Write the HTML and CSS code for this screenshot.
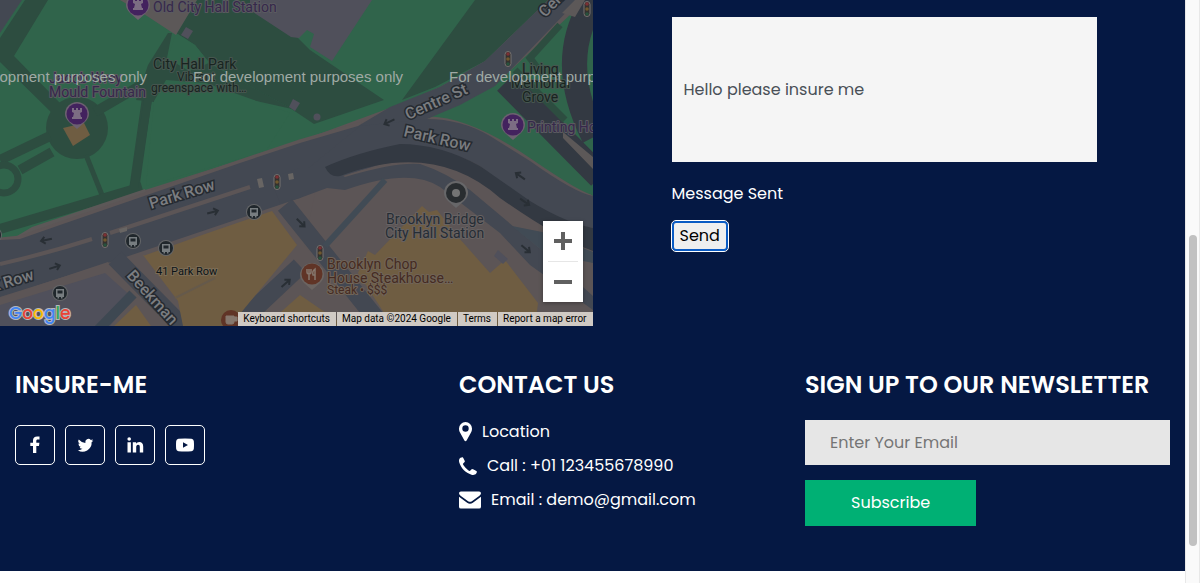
FILE: index.html
```html
<!DOCTYPE html>
<html lang="en">
<head>
<meta charset="utf-8">
<meta name="viewport" content="width=device-width, initial-scale=1">
<title>Insure-Me</title>
<link rel="stylesheet" href="styles.css">
</head>
<body>
<div class="page">
  <main class="contact">
    <section class="map" aria-label="Map">
      <svg class="map-art" viewBox="0 0 593 326" preserveAspectRatio="xMinYMax slice">
        <defs>
          <g id="bus"><circle r="8" fill="#656769"/><circle r="7" fill="#20272c"/><path d="M-4-4h8v8h-1.500v1.500h-1.500V4h-2v1.500h-1.500V4H-4z" fill="#777d80"/><path d="M-2.500-2.500h5v3h-5z" fill="#20272c"/></g>
          <g id="signal"><rect x="-3" y="-7.500" width="6" height="15" rx="3" fill="#34312f" stroke="#777270"/><circle cy="-5" r="1.800" fill="#7c3034"/><circle r="1.800" fill="#70582e"/><circle cy="5" r="1.800" fill="#28523e"/></g>
          <g id="arrow"><path d="M-6 0H5M1-3.500L5 0 1 3.500" fill="none" stroke="#292f35" stroke-width="2"/></g>
          <g id="castle"><path d="M0 15L-8 8Q-12 4-12 0A12 12 0 1 1 12 0Q12 4 8 8Z" fill="#6c6070"/><circle r="10.500" fill="#43225e"/><path d="M-5-6h2v2h2v-2h2v2h2v-2h2v4L3-1l1 4h1v2h-10V3h1l1-4-2-1z" fill="#7c6d83"/></g>
        </defs>
        <path fill="#5c5556" d="M0 0h593v326H0z"/>
        <path fill="#30644b" d="M0 0h548L485 61 440 87 395 106 300 141 145 190 10 240H0z"/>
        <path fill="#434852" d="M0 0h22L0 33z"/>
        <path fill="#2d4d40" d="M25 0h23L14 56 60 103 55 116 0 62V38zM197 0l-21 33 19 12 12 15 43 26 40 22 24 16 70-24-74-50-50-50zM475 0h73l-63 61-50 26-33 13z"/>
        <circle cx="77" cy="128" r="31" fill="#2d4d40"/>
        <g fill="none" stroke="#2d4d40">
          <path stroke-width="10" d="M95 112L150 80M147 98L134 190M50 136L0 160M52 152L20 170"/>
          <path stroke-width="5" d="M86 155L104 200"/>
          <circle cx="4" cy="179" r="14" stroke-width="7"/>
          <path stroke-width="10" d="M0 229L142 187"/>
        </g>
        <path fill="#2d4d40" d="M168 33h4l-5 25 22 13 20-8 43 24 40 22-90-20-48 13-18-2 12-35z"/>
        <path fill="#30644b" d="M176 33l19 12 12 15-40 0zM166 80l40 3 84 30-24 38-120 35 8-85z"/>
        <path fill="#2d4d40" d="M144 100h8L138 188h-8z"/>
        <path fill="#5c5858" d="M120 0h77l-21 35-29-19zM12 239l20-12L145 189l2 5z"/>
        <path fill="#50505b" d="M250 0h122l-40 61-22-14 4-13-7-4-8 8-8-1-41-27zM186 27l7 4-5 8-7-4zM293 99l7 4-5 8-6-4z"/>
        <circle cx="317" cy="117" r="3.500" fill="#50505b"/>
        <path fill="#6f5d42" d="M63 128l21-5 6 12-17 11z"/>
        <path fill="#30644b" d="M428 118l68-34 75-70 22-14v196l-23-9-40-26-40-25-30-13z"/>
        <path fill="none" stroke="#5c5556" stroke-width="5" d="M0 240l20-2 40-14 180-62 60-20 62-18M430 119Q470 120 530 161T593 196"/>
        <path fill="#434852" d="M0 240l20-1 40-14 180-62 60-20 58-17 32-19 50-20 45-26 25-24L548 0h30l-52 54-31 32-35 19-33 14v30l-107 35-20 14-195 66L0 297z"/>
        <path fill="#434852" d="M360 126l67-7q34 0 63 17l40 25q45 32 63 35v32q-45-6-113-62-60-33-150-1l-30 10z"/>
        <path fill="#5c5556" d="M343 176q70-25 122-3 30 15 75 49l53 28v76H400l-96-80 12-58z"/>
        <path fill="#434852" d="M270 178l30-10h30l15 9q50-15 75-13 25 8 50 26l50 42 25 21 48 43v14l-63-45-30-32-60-46q-30-20-95 3l-18-2-27 10-20 5z"/>
        <path fill="#333942" d="M325 167q30-14 75-23 40 0 80 22l50 35q36 22 63 27v23q-35-12-93-53-65-58-160-22-10 2-15-9z"/>
        <path fill="none" stroke="#333942" stroke-width="25" d="M506 82L600 177M594 0Q555 60 594 137"/>
        <path fill="none" stroke="#2d4d40" stroke-width="7" d="M515 70l50 50M560 25L530 58 550 85"/>
        <path fill="#5c5858" d="M562 13L575 0h10l-10 17zM563 132l30 25v12l-30-31z"/>
        <path fill="none" stroke="#5c5556" stroke-width="4" d="M0 264Q45 254 92 239M110 233L250 187"/>
        <path fill="#5c5556" d="M0 298L108 262l30 32-34 32H0z"/>
        <path fill="#50505b" d="M0 305l105-32 28 25-23 28H0z"/>
        <path fill="none" stroke="#434852" stroke-width="18" d="M115 258L186 330M285 205L390 336M236 326L300 266"/>
        <path fill="none" stroke="#3e4852" stroke-width="10" d="M133 294L98 330"/>
        <path fill="none" stroke="#414b55" stroke-width="6" d="M385 180L325 246"/>
        <path fill="#6f5d42" d="M143 256l62-22 67-23 25 34-67 81h-47l-5-25-35-46zM114 326l22-21 15 21zM265 326l35-31 45 31zM358 273l10-22 7 4 47-49 7 6 8-2 22 28 31 35 15-13 33 43-3 25H394z"/>
        <path fill="none" stroke="#655a4b" stroke-width="2" d="M175 298l40-20"/>
        <path fill="#50505b" d="M498 250l10 9-5 5-9-8z"/>
        <path fill="#414b55" d="M512 226l30 6 51 20v11l-48-10z"/>
        <path fill="#686563" d="M257 179l5-1 2 9-5 1zM288 174l5-1 1 6-5 1zM119 229l8-2v4l-7 2z"/>
        <use href="#bus" x="133" y="241"/><use href="#bus" x="166" y="248"/><use href="#bus" x="254" y="212"/><use href="#bus" x="60" y="293"/><use href="#bus" x="-6" y="235"/>
        <use href="#signal" x="105" y="240"/><use href="#signal" x="277" y="182"/><use href="#signal" x="320" y="253"/><use href="#signal" x="508" y="59"/><use href="#signal" x="587" y="9"/>
        <use href="#arrow" transform="translate(46 240) rotate(168)"/><use href="#arrow" transform="translate(55 267) rotate(-18)"/><use href="#arrow" transform="translate(213 212) rotate(-15)"/><use href="#arrow" transform="translate(389 122) rotate(155)"/><use href="#arrow" transform="translate(520 176) rotate(215)"/><use href="#arrow" transform="translate(525 202) rotate(35)"/><use href="#arrow" transform="translate(526 249) rotate(40)"/><use href="#arrow" transform="translate(286 283) rotate(-42)"/><use href="#arrow" transform="translate(301 223) rotate(45)"/>
        <use href="#castle" x="138" y="5"/><use href="#castle" x="77" y="114"/><use href="#castle" x="513" y="125"/>
        <path d="M456 208l-8-7q-4-4-4-8a12 12 0 1 1 24 0q0 4-4 8z" fill="#676769"/><circle cx="456" cy="193" r="10" fill="#292d30"/><circle cx="456" cy="193" r="4" fill="#747474"/>
        <path d="M312 290l-8-7q-4-4-4-8a12 12 0 1 1 24 0q0 4-4 8z" fill="#6b6461"/><circle cx="312" cy="274" r="10.500" fill="#603426"/><path d="M309 269v11M307 269v3q0 2 2 2t2-2v-3M315 280v-11q-3 2-2 6h2" fill="none" stroke="#85776d" stroke-width="1.500"/>
        <circle cx="231" cy="320" r="10" fill="#603426"/><path d="M226 316h8v6q0 2-2 2h-4q-2 0-2-2zM234 317h3v4h-3" fill="#85776d" stroke="#85776d"/>
        <g class="place purple">
          <text x="153" y="12">Old City Hall Station</text>
          <text x="49" y="83">Jacob Wrey</text><text x="49" y="97">Mould Fountain</text>
          <text x="527" y="132">Printing House</text>
        </g>
        <g class="place dark">
          <text x="153" y="69">City Hall Park</text>
          <text class="small" x="177" y="81">Vibrant</text><text class="small" x="151" y="92">greenspace with…</text>
          <text x="522" y="74">Living</text><text x="511" y="88">Memorial</text><text x="522" y="102">Grove</text>
        </g>
        <g class="place slate"><text x="386" y="224">Brooklyn Bridge</text><text x="385" y="238">City Hall Station</text></g>
        <g class="place brown"><text x="327" y="269">Brooklyn Chop</text><text x="327" y="283">House Steakhouse…</text><text class="small" x="327" y="294">Steak • $$$</text></g>
        <text class="address" x="156" y="275">41 Park Row</text>
        <g class="road">
          <text transform="translate(151 209) rotate(-17)">Park Row</text>
          <text transform="translate(-30 299) rotate(-17)">Park Row</text>
          <text transform="translate(408 120) rotate(-24)">Centre St</text>
          <text transform="translate(403 136) rotate(13)">Park Row</text>
          <text transform="translate(545 18) rotate(-45)">Centre St</text>
          <text transform="translate(126 276) rotate(48)">Beekman</text>
        </g>
        <g class="notice"><text x="-63" y="82">For development purposes only</text><text x="193" y="82">For development purposes only</text><text x="449" y="82">For development purposes only</text></g>
        <g class="google"><text x="9" y="319"><tspan fill="#4285f4">G</tspan><tspan fill="#ea4335">o</tspan><tspan fill="#fbbc04">o</tspan><tspan fill="#4285f4">g</tspan><tspan fill="#34a853">l</tspan><tspan fill="#ea4335">e</tspan></text></g>
      </svg>
      <div class="zoom">
        <button type="button" aria-label="Zoom in"><svg width="18" height="18"><path d="M7 0h4v7h7v4h-7v7H7v-7H0V7h7z" fill="#606060"/></svg></button>
        <button type="button" aria-label="Zoom out"><svg width="18" height="18"><path d="M0 7h18v4H0z" fill="#606060"/></svg></button>
      </div>
      <div class="credits">
        <button type="button">Keyboard shortcuts</button><span>Map data ©2024 Google</span><a href="#terms">Terms</a><a href="#report">Report a map error</a>
      </div>
    </section>
    <form class="message">
      <input class="message-box" type="text" aria-label="Message" value="Hello please insure me">
      <p class="status">Message Sent</p>
      <button class="send" type="button">Send</button>
    </form>
  </main>
  <footer class="footer">
    <section>
      <h2>INSURE-ME</h2>
      <nav class="social">
        <a href="#facebook" aria-label="Facebook"><svg width="18" height="18" viewBox="0 0 18 18"><path d="M13.500.5v2.900h-1.700c-1.200 0-1.500.6-1.500 1.500v1.900h3.100l-.4 3.100h-2.700V17H7V9.900H4.300V6.800H7V4.500C7 1.900 8.600.4 11.100.4c1 0 2 .1 2.400.1z"/></svg></a>
        <a href="#twitter" aria-label="Twitter"><svg width="17" height="17" viewBox="0 0 24 24"><path d="M23 4.900a9 9 0 0 1-2.600.7 4.500 4.500 0 0 0 2-2.500 9 9 0 0 1-2.900 1.100A4.500 4.500 0 0 0 11.800 8.300 12.800 12.800 0 0 1 2.500 3.600a4.500 4.500 0 0 0 1.400 6 4.500 4.500 0 0 1-2-.6 4.500 4.500 0 0 0 3.600 4.500 4.500 4.500 0 0 1-2 .1 4.500 4.500 0 0 0 4.200 3.100A9 9 0 0 1 1 18.600a12.800 12.800 0 0 0 19.700-11.400A9 9 0 0 0 23 4.900z"/></svg></a>
        <a href="#linkedin" aria-label="LinkedIn"><svg width="18" height="18" viewBox="0 0 18 18"><path d="M1.500 6.300h3.400v10.200H1.500zM3.200 1.200a1.800 1.800 0 1 1 0 3.600 1.800 1.800 0 0 1 0-3.600zM6.800 6.300h3.300v1.500c.7-1.100 1.700-1.800 3.200-1.800 2.500 0 3.900 1.600 3.900 4.600v5.900h-3.400V11c0-1.400-.5-2.300-1.700-2.300-1.300 0-1.900 1-1.900 2.400v5.400H6.800z"/></svg></a>
        <a href="#youtube" aria-label="YouTube"><svg width="18" height="18" viewBox="0 0 18 18"><path fill-rule="evenodd" d="M2.500 2.800Q9 2 15.500 2.800 17.500 3 17.800 5q.4 4 0 8-.3 2-2.300 2.200-6.500.8-13 0Q.5 15 .2 13q-.4-4 0-8 .3-2 2.300-2.200zM7 6.200v5.600l5-2.800z"/></svg></a>
      </nav>
    </section>
    <section>
      <h2>CONTACT US</h2>
      <address class="details">
        <a href="#location"><svg width="13" height="20" viewBox="0 0 13 20"><path fill-rule="evenodd" d="M6.500 0A6.500 6.500 0 0 1 13 6.500c0 2-.5 3-1 4L7.600 18.500q-1.100 1.500-2.200 0L1 10.500c-.5-1-1-2-1-4A6.500 6.500 0 0 1 6.500 0zm0 3.300a3.200 3.200 0 1 0 0 6.400 3.200 3.200 0 0 0 0-6.400z"/></svg>Location</a>
        <a href="#call"><svg width="18" height="18" viewBox="0 0 18 18"><path d="M17.800 14.300c.2.500-.1 1.500-.6 2.200-1 1.500-3 1.700-4.700 1.200C6.500 16 1.800 11 .2 5.300-.3 3.500.1 1.800 1.500.8 2.200.3 3.400 0 3.800.2c.4.300 1.900 3.500 2.100 4 .2.800-2 2.200-2 2.900 0 1.100 4.800 6.500 6.500 6.800.8.100 2.200-2.200 3-2 .5.200 4.100 1.800 4.400 2.400z"/></svg>Call : +01 123455678990</a>
        <a href="#email"><svg width="22" height="18" viewBox="0 0 23 18"><path d="M0 2q0-2 2-2h19q2 0 2 2-.2 1.500-2 2.800l-7.500 5.500q-2 1.200-4 0L2 4.800Q.2 3.500 0 2zM0 5.500l8.500 6.400q3 2 6 0L23 5.500V16q0 2-2 2H2q-2 0-2-2z"/></svg>Email : demo@gmail.com</a>
      </address>
    </section>
    <section>
      <h2>SIGN UP TO OUR NEWSLETTER</h2>
      <form class="newsletter">
        <input type="email" placeholder="Enter Your Email" aria-label="Enter Your Email">
        <button type="button">Subscribe</button>
      </form>
    </section>
  </footer>
</div>
<div class="scroll-track" aria-hidden="true"><div class="scroll-thumb"></div></div>
</body>
</html>
```
FILE: styles.css
```css
* { box-sizing: border-box; }
body {
  margin: 0;
  min-height: 100vh;
  display: flex;
  background: #fff;
  color: #fff;
  font: 400 16px/24px Poppins, Inter, sans-serif;
}
button, input { font: inherit; }
a { color: inherit; text-decoration: none; }
.page { flex: 1; align-self: flex-start; background: #051843; }
.contact { display: grid; grid-template-columns: 1fr 1fr; }

.map { position: relative; height: 326px; overflow: hidden; }
.map-art { display: block; width: 100%; height: 100%; font-family: Roboto, sans-serif; font-weight: 400; }
.place { font-size: 14px; paint-order: stroke; stroke-width: 2px; stroke-linejoin: round; }
.place .small { font-size: 12px; }
.purple { fill: #36284b; stroke: #5a5a60; }
.dark { fill: #18241f; stroke: #46564f; }
.slate { fill: #262d35; stroke: #666263; }
.brown { fill: #452b22; stroke: #706458; }
.address { font-size: 11px; fill: #0c1418; stroke: #7b6c56; stroke-width: 2px; paint-order: stroke; }
.road { font-size: 16px; font-weight: 500; fill: #7b7d80; stroke: #252a30; stroke-width: 3px; paint-order: stroke; }
.notice { font: 15px "Liberation Sans", Arial, sans-serif; fill: #a0aaa5; }
.google { font: 500 20px Lato, sans-serif; font-family: Poppins, Lato, sans-serif; font-size: 17px; stroke: #b5b8bc; stroke-width: 2px; paint-order: stroke; }

.zoom {
  position: absolute;
  right: 10px;
  bottom: 24px;
  width: 40px;
  background: #fff;
  box-shadow: 0 1px 4px #0005;
}
.zoom button {
  display: grid;
  place-items: center;
  width: 40px;
  height: 40px;
  padding: 0;
  border: 0;
  background: none;
}
.zoom button + button::before { content: ""; width: 30px; height: 1px; background: #e6e6e6; }
.zoom button + button { height: 41px; grid-template-rows: 1px 1fr; }
.credits {
  position: absolute;
  right: 0;
  bottom: 0;
  display: flex;
  gap: 1px;
  color: #000;
  font: 10px/14px Roboto, sans-serif;
  white-space: nowrap;
}
.credits > * { padding: 0 6px 0 5px; border: 0; background: #d0cac4; }

.message { padding: 17px 88px 0 79px; }
.message-box {
  display: block;
  width: 100%;
  height: 145px;
  padding: 0 12px;
  border: 0;
  background: #f5f5f5;
  color: #495057;
}
.status { margin: 20px 0 15px; }
.send {
  height: 30px;
  padding: 0 6px;
  border: 2px solid #0a5bc4;
  border-radius: 4px;
  outline: 1px solid #fff;
  background: #efefef;
  color: #000;
}

.footer {
  display: grid;
  grid-template-columns: 414fr 316fr 365fr;
  gap: 30px;
  padding: 44px 15px 45px;
}
h2 { margin: 0 0 20px; font-size: 24px; line-height: 30px; font-weight: 600; white-space: nowrap; }
.social { display: flex; gap: 10px; padding-top: 5px; }
.social a {
  display: grid;
  place-items: center;
  width: 40px;
  height: 40px;
  border: 1px solid #fff;
  border-radius: 5px;
}
.social svg, .details svg { fill: #fff; }
.details { display: flex; flex-direction: column; gap: 10px; font-style: normal; }
.details a { display: flex; align-items: center; gap: 10px; }
.newsletter { display: flex; flex-direction: column; align-items: flex-start; gap: 15px; }
.newsletter input {
  width: 100%;
  height: 45px;
  padding: 0 25px;
  border: 0;
  background: #e6e6e6;
}
.newsletter input::placeholder { color: #757575; }
.newsletter button { padding: 11px 46px; border: 0; background: #00b074; color: #fff; }

.scroll-track {
  width: 15px;
  height: 100vh;
  padding: 235px 3px 0;
  border: solid #e8e8e8;
  border-width: 0 1px;
  background: #fafafa;
}
.scroll-thumb { width: 8px; height: 311px; border-radius: 4px; background: #c1c1c1; }
```
